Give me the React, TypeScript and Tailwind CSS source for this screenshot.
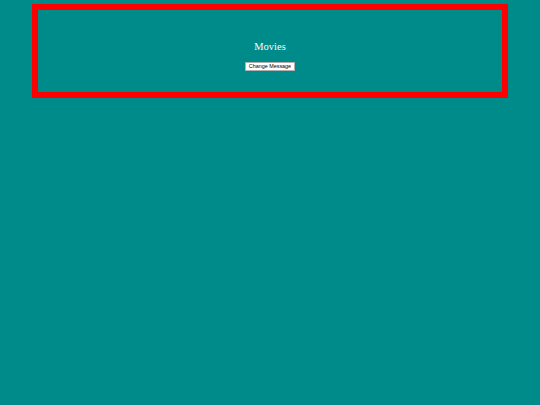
export default function App() {
  return (
    <div className="min-h-screen bg-[#008b8b] pt-[4px]">
      <div className="ml-[32px] w-[476px] border-[6px] border-[#ff0000] pt-[30px] pb-[21px] flex flex-col items-center">
        <h2 className="text-[10.5px] leading-[13px] text-[#f0ffff] font-['Liberation_Serif',serif]">
          Movies
        </h2>
        <button className="mt-[9px] h-[9px] px-[3px] bg-white border border-[#b0b0b0] text-[5.4px] leading-[7px] text-black font-['Liberation_Sans',sans-serif] flex items-center">
          Change Message
        </button>
      </div>
    </div>
  )
}
